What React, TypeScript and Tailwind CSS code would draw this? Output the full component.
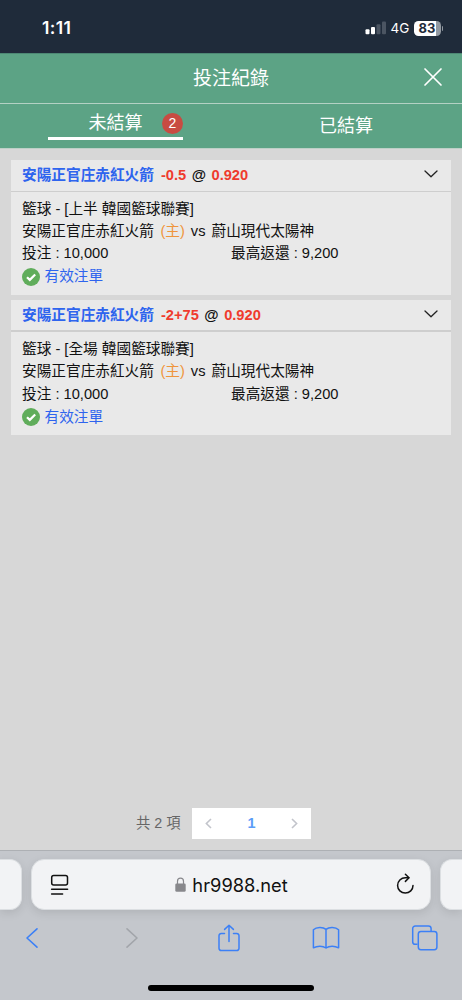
import React from 'react';

interface Bet {
  id: number;
  handicap: string;
  odds: string;
  period: string;
  divider: string;
}

const bets: Bet[] = [
  { id: 1, handicap: '-0.5', odds: '0.920', period: '上半', divider: 'border-b' },
  { id: 2, handicap: '-2+75', odds: '0.920', period: '全場', divider: 'border-b-2' },
];

function StatusBar() {
  return (
    <div className="flex h-[53px] items-start justify-between bg-[#1f2b3a] pl-[42px] pr-[19px] text-white">
      <span className="mt-[16px] font-['Inter','Liberation_Sans',sans-serif] text-[17.5px] font-semibold leading-6 tracking-[0.4px]">1:11</span>
      <div className="mt-[20px] flex h-[16px] items-center">
        <svg width="22" height="14" viewBox="0 0 22 14" className="mr-[4px]">
          <rect x="0.5" y="8.2" width="4" height="5" rx="1" fill="#fff" />
          <rect x="6" y="6" width="4" height="7.2" rx="1" fill="#fff" />
          <rect x="11.5" y="3.2" width="4" height="10" rx="1" fill="#4b5562" />
          <rect x="17" y="0.5" width="4" height="12.7" rx="1" fill="#4b5562" />
        </svg>
        <span className="w-[23px] font-['Inter','Liberation_Sans',sans-serif] text-[13.5px] leading-4">4G</span>
        <div className="flex h-[15px] w-[27px] items-center justify-center rounded-[4.5px] bg-[linear-gradient(90deg,#fff_83%,#9299a1_83%)] font-['Inter','Liberation_Sans',sans-serif] text-[13px] font-bold leading-none text-[#1f2b3a]">
          83
        </div>
        <div className="ml-px h-[5px] w-[1.5px] rounded-r bg-[#9299a1]" />
      </div>
    </div>
  );
}

function Header() {
  return (
    <div className="bg-[#5ca385] text-white">
      <div className="grid h-[51px] grid-cols-[60px_1fr_60px] items-center border-b border-[#b4d1c4] border-t border-t-[#4d8874]">
        <span />
        <h1 className="text-center text-[19px] leading-6">投注紀錄</h1>
        <svg width="20" height="20" viewBox="0 0 20 20" fill="none" stroke="currentColor" strokeWidth="1.7" strokeLinecap="round" className="ml-[21px] -mt-[3px]">
          <path d="M2 2l16 16M18 2L2 18" />
        </svg>
      </div>
      <div className="grid h-[45px] grid-cols-2 border-b border-[#bdd0c7] text-[18px] leading-6">
        <div className="mx-auto grid h-[36px] w-[135px] grid-cols-[1fr_auto_1fr] items-center border-b-[3.5px] border-white pt-[5px]">
          <span />
          <span>未結算</span>
          <span className="flex h-[21px] w-[21px] items-center justify-center justify-self-end rounded-full bg-[#c84b42] text-[14px] leading-none">2</span>
        </div>
        <div className="pt-[10px] pr-px text-center">已結算</div>
      </div>
    </div>
  );
}

function BetCard({ bet }: { bet: Bet }) {
  return (
    <div className="flex h-[135px] flex-col bg-[#e9e9e9] text-[14.67px] leading-[22.3px] text-[#111]">
      <div className={`flex h-[32px] shrink-0 items-center justify-between border-[#cecece] pl-[11px] pr-[13px] font-bold ${bet.divider}`}>
        <div className="flex">
          <span className="mr-[7px] text-[#2e64ee]">安陽正官庄赤紅火箭</span>
          <span className="text-[#ef3b2d]">{bet.handicap}</span>
          <span className="mx-[5.5px]">@</span>
          <span className="text-[#ef3b2d]">{bet.odds}</span>
        </div>
        <svg width="14" height="8" viewBox="0 0 14 8" fill="none" stroke="#222" strokeWidth="1.3" strokeLinecap="round" strokeLinejoin="round" className="-mt-[3px]">
          <path d="M1 1l6 5.8L13 1" />
        </svg>
      </div>
      <div className="px-[11px] pt-[6px]">
        <p>籃球 - [{bet.period} 韓國籃球聯賽]</p>
        <p>
          <span className="mr-[6.5px]">安陽正官庄赤紅火箭</span>
          <span className="mr-[6px] text-[#ef953c]">(主)</span>
          <span className="mr-[6px]">vs</span>
          <span>蔚山現代太陽神</span>
        </p>
        <div className="grid grid-cols-2">
          <p>投注 : 10,000</p>
          <p>最高返還 : 9,200</p>
        </div>
        <div className="flex items-center gap-[4.5px] pt-px text-[#2e64ee]">
          <svg width="18" height="18" viewBox="0 0 18 18">
            <circle cx="9" cy="9" r="9" fill="#60ad5b" />
            <path d="M5 9.2l2.8 2.7 5.4-5.4" fill="none" stroke="#fff" strokeWidth="2.2" />
          </svg>
          <span>有效注單</span>
        </div>
      </div>
    </div>
  );
}

function Pagination() {
  return (
    <div className="mb-[11px] flex h-[31px] items-center pl-[136px]">
      <span className="w-[56px] whitespace-nowrap text-[14.3px] text-[#666]">共 2 項</span>
      <div className="flex h-[31px] w-[119px] items-center justify-between bg-white px-[13px]">
        <svg width="7" height="11" viewBox="0 0 7 11" fill="none" stroke="#c2c4cb" strokeWidth="1.6">
          <path d="M6 1L1.4 5.5 6 10" />
        </svg>
        <span className="text-[14.5px] font-bold text-[#5b9df8]">1</span>
        <svg width="7" height="11" viewBox="0 0 7 11" fill="none" stroke="#c2c4cb" strokeWidth="1.6">
          <path d="M1 1l4.6 4.5L1 10" />
        </svg>
      </div>
    </div>
  );
}

function AddressBar() {
  return (
    <div className="flex justify-between pt-[8px]">
      <div className="h-[51px] w-[22px] rounded-r-[12px] border border-l-0 border-[#dcdfe2] bg-[#f2f3f5] shadow-[0_3px_10px_rgba(0,0,0,0.1)]" />
      <div className="flex h-[51px] w-[400px] items-center justify-between rounded-[13px] border border-[#dcdfe2] bg-[#f2f3f5] pl-[18px] pr-[15px] shadow-[0_3px_10px_rgba(0,0,0,0.1)]">
        <svg width="20" height="22" viewBox="0 0 20 22" fill="none" stroke="#111" strokeWidth="1.5" strokeLinecap="round">
          <rect x="1.7" y="1.6" width="15.8" height="9.4" rx="2" />
          <path d="M1.6 15.3h16M1.6 20h11" />
        </svg>
        <div className="-ml-[3px] flex items-center gap-[6px]">
          <svg width="11" height="15" viewBox="0 0 11 15">
            <path d="M2.5 7V4.2a3 3 0 0 1 6 0V7" fill="none" stroke="#88888c" strokeWidth="1.2" />
            <rect x="0.3" y="6.4" width="10.4" height="8.4" rx="1.4" fill="#88888c" />
          </svg>
          <span className="font-['Inter','Liberation_Sans',sans-serif] text-[18.3px] leading-6 text-[#111]">hr9988.net</span>
        </div>
        <svg width="19" height="22" viewBox="0 0 19 22" fill="none" stroke="#111" strokeWidth="1.5" strokeLinecap="round" strokeLinejoin="round" className="-mt-[2px]">
          <path d="M17 12.4a7.7 7.7 0 1 1-7.7-7.7h3.4" />
          <path d="M9.4 1.2l3.6 3.6-3.6 3.6" />
        </svg>
      </div>
      <div className="h-[51px] w-[22px] rounded-l-[12px] border border-r-0 border-[#dcdfe2] bg-[#f2f3f5] shadow-[0_3px_10px_rgba(0,0,0,0.1)]" />
    </div>
  );
}

function Toolbar() {
  return (
    <div className="grid h-[56px] grid-cols-[64px_136px_57px_138px_58px] items-center justify-items-center text-[#3c80f6]">
      <svg width="14" height="22" viewBox="0 0 14 22" fill="none" stroke="currentColor" strokeWidth="1.6" strokeLinecap="round" strokeLinejoin="round">
        <path d="M12 1.8L2 11l10 9.2" />
      </svg>
      <svg width="14" height="22" viewBox="0 0 14 22" fill="none" stroke="#a2a5aa" strokeWidth="1.6" strokeLinecap="round" strokeLinejoin="round">
        <path d="M2 1.8L12 11 2 20.2" />
      </svg>
      <svg width="24" height="28" viewBox="0 0 24 28" fill="none" stroke="currentColor" strokeWidth="1.5" strokeLinecap="round" strokeLinejoin="round" className="-mt-px">
        <path d="M7.5 9.5H4.2A2.2 2.2 0 0 0 2 11.7v12.6a2.2 2.2 0 0 0 2.2 2.2h15.6a2.2 2.2 0 0 0 2.2-2.2V11.7a2.2 2.2 0 0 0-2.2-2.2h-3.3" />
        <path d="M12 17.5V1.5M7.6 5.4L12 1.2l4.4 4.2" />
      </svg>
      <svg width="28" height="24" viewBox="0 0 28 24" fill="none" stroke="currentColor" strokeWidth="1.5" strokeLinejoin="round">
        <path d="M14 3.4C11 .8 4.5.8 1.4 3.8v18c3.7-2.1 9.2-2.4 12.6.2V3.4zM14 3.4c3-2.6 9.5-2.6 12.6.4v18c-3.7-2.1-9.2-2.4-12.6.2" />
      </svg>
      <svg width="27" height="26" viewBox="0 0 27 26" fill="none" stroke="currentColor" strokeWidth="1.5" strokeLinejoin="round">
        <path d="M6.5 19.3H4.3a2.6 2.6 0 0 1-2.6-2.6V3.5A2.6 2.6 0 0 1 4.3.9h13.2a2.6 2.6 0 0 1 2.6 2.6v3" />
        <rect x="7.3" y="6.5" width="18.6" height="18.2" rx="2.6" />
      </svg>
    </div>
  );
}

export default function App() {
  return (
    <div className="flex h-[1000px] w-[462px] flex-col overflow-hidden bg-[#d7d7d7] font-['Liberation_Sans','Noto_Sans_CJK_TC',sans-serif]">
      <StatusBar />
      <Header />
      <main className="flex flex-1 flex-col">
        <div className="flex flex-1 flex-col gap-[5.5px] px-[11px] pt-[10.5px]">
          {bets.map(bet => (
            <BetCard key={bet.id} bet={bet} />
          ))}
        </div>
        <Pagination />
      </main>
      <footer className="flex h-[150px] flex-col border-t border-[#adb0b4] bg-[#c4c7cc]">
        <AddressBar />
        <Toolbar />
        <div className="mx-auto mt-[19px] h-[6px] w-[166px] rounded-full bg-black" />
      </footer>
    </div>
  );
}
